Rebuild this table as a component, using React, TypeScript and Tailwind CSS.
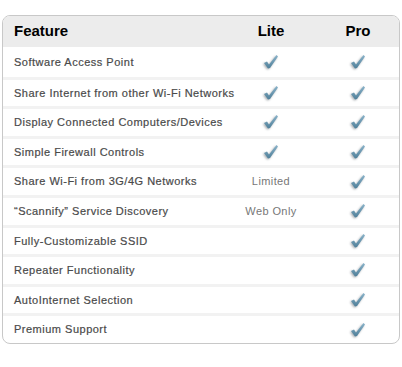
import React from "react";

const rows: { name: string; lite: "check" | string | null }[] = [
  { name: "Software Access Point", lite: "check" },
  { name: "Share Internet from other Wi-Fi Networks", lite: "check" },
  { name: "Display Connected Computers/Devices", lite: "check" },
  { name: "Simple Firewall Controls", lite: "check" },
  { name: "Share Wi-Fi from 3G/4G Networks", lite: "Limited" },
  { name: "\u201CScannify\u201D Service Discovery", lite: "Web Only" },
  { name: "Fully-Customizable SSID", lite: null },
  { name: "Repeater Functionality", lite: null },
  { name: "AutoInternet Selection", lite: null },
  { name: "Premium Support", lite: null },
];

function Check() {
  return (
    <svg width="20" height="18" viewBox="0 0 20 18" className="[filter:drop-shadow(-0.5px_1.5px_1px_rgba(60,70,80,0.45))]">
      <defs>
        <linearGradient id="cg" x1="0" y1="0" x2="0" y2="1">
          <stop offset="0" stopColor="#8ab3ca" />
          <stop offset="1" stopColor="#4f7f99" />
        </linearGradient>
      </defs>
      <path d="M3 10 L6 8.5 L8 11.5 L15.5 2 L17 3.5 L9 15 L7 15.5 Z" fill="url(#cg)" />
    </svg>
  );
}

export default function App() {
  return (
    <div className="w-[402px] h-[367px] bg-white pt-[15px] pl-[2px]" style={{ fontFamily: "'Liberation Sans', Arial, sans-serif" }}>
      <div className="w-[398px] border border-[#c8c8c8] rounded-[8px] overflow-hidden">
        <div className="flex items-center h-[31px] bg-[#ececec] text-[15px] font-bold text-black pr-[11px]">
          <div className="pl-[11px] flex-1">Feature</div>
          <div className="w-[60px] text-center mr-[27px]">Lite</div>
          <div className="w-[60px] text-center">Pro</div>
        </div>
        {rows.map((r, i) => (
          <div key={i} className={`flex items-center h-[29.6px] text-[11px] text-[#4a4a4a] pr-[11px] ${i > 0 ? "border-t-[3px] border-[#f2f2f2]" : ""}`}>
            <div className="pl-[11px] flex-1 min-w-0 whitespace-nowrap tracking-[0.5px] [-webkit-text-stroke:0.2px_#4a4a4a]">{r.name}</div>
            <div className="w-[60px] flex justify-center mr-[27px] text-[#777] whitespace-nowrap">
              {r.lite === "check" ? <Check /> : r.lite ? <span className="tracking-[0.4px]">{r.lite}</span> : null}
            </div>
            <div className="w-[60px] flex justify-center">
              <Check />
            </div>
          </div>
        ))}
      </div>
    </div>
  );
}
